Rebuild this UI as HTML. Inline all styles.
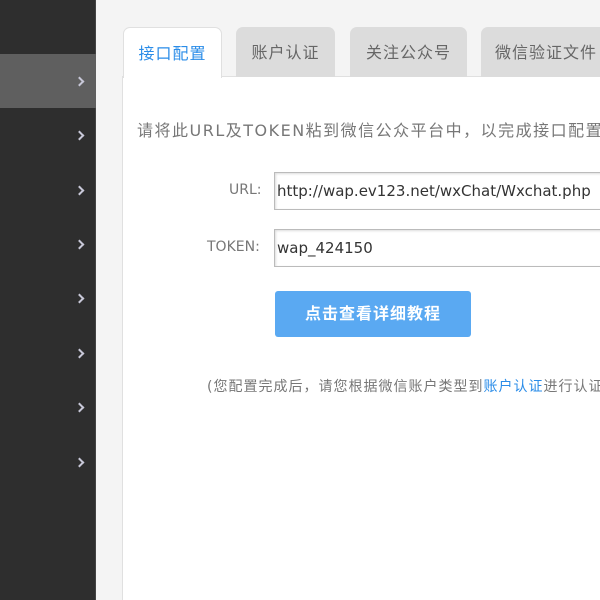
<!DOCTYPE html>
<html><head><meta charset="utf-8"><style>
*{margin:0;padding:0;box-sizing:border-box}
html,body{width:600px;height:600px;overflow:hidden}
body{background:#f4f4f4;font-family:"DejaVu Sans","Noto Sans CJK SC",sans-serif;position:relative}
.side{position:absolute;left:0;top:0;width:96px;height:600px;background:#2e2e2e;border-right:1px solid #444}
.row{position:absolute;left:0;width:96px;height:54px}
.row.act{background:#5f5f5f}
.chev{position:absolute;left:76px;width:7px;height:7px;border-right:2px solid #c8c8d8;border-top:2px solid #c8c8d8;transform:rotate(45deg)}
.panel{position:absolute;left:122px;top:76px;width:500px;height:540px;background:#fff;border:1px solid #e0e0e0}
.tab{position:absolute;top:27px;height:50px;background:#dcdcdc;border-radius:7px 7px 0 0;font-size:16px;color:#666;text-align:center;line-height:52px;letter-spacing:1px}
.tab.act{background:#fff;color:#2a8ce8;border:1px solid #e0e0e0;border-bottom:none;height:51px;z-index:2}
.t{position:absolute;font-size:15px;color:#777;white-space:nowrap}
.inp{position:absolute;left:274px;width:340px;height:38px;border:1px solid #bbb;background:#fff;font-size:15px;color:#333;padding-left:2px;line-height:36px;white-space:nowrap;box-shadow:inset 1px 1px 2px #ddd}
.btn{position:absolute;left:275px;top:291px;width:196px;height:46px;background:#5aa9f2;border-radius:3px;color:#fff;font-weight:bold;font-size:16px;text-align:center;line-height:46px;letter-spacing:1px}
</style></head><body>
<div class="side">
<div class="row act" style="top:54px"></div>
<div class="chev" style="top:78px"></div>
<div class="chev" style="top:132px"></div>
<div class="chev" style="top:187px"></div>
<div class="chev" style="top:241px"></div>
<div class="chev" style="top:295px"></div>
<div class="chev" style="top:350px"></div>
<div class="chev" style="top:404px"></div>
<div class="chev" style="top:459px"></div>
</div>
<div class="panel"></div>
<div class="tab act" style="left:123px;width:99px">接口配置</div>
<div class="tab" style="left:236px;width:99px">账户认证</div>
<div class="tab" style="left:350px;width:117px">关注公众号</div>
<div class="tab" style="left:481px;width:130px">微信验证文件</div>
<div class="t" style="left:137px;top:117px;font-size:16px;letter-spacing:1.5px">请将此URL及TOKEN粘到微信公众平台中，以完成接口配置</div>
<div class="t" style="left:229px;top:182px;font-size:14px">URL:</div>
<div class="t" style="left:207px;top:239px;font-size:14px">TOKEN:</div>
<div class="inp" style="top:172px">http://wap.ev123.net/wxChat/Wxchat.php</div>
<div class="inp" style="top:229px">wap_424150</div>
<div class="btn">点击查看详细教程</div>
<div class="t" style="left:207px;top:376px;font-size:14px;letter-spacing:1px">(您配置完成后，请您根据微信账户类型到<span style="color:#2a8ce8">账户认证</span>进行认证</div>
</body></html>
